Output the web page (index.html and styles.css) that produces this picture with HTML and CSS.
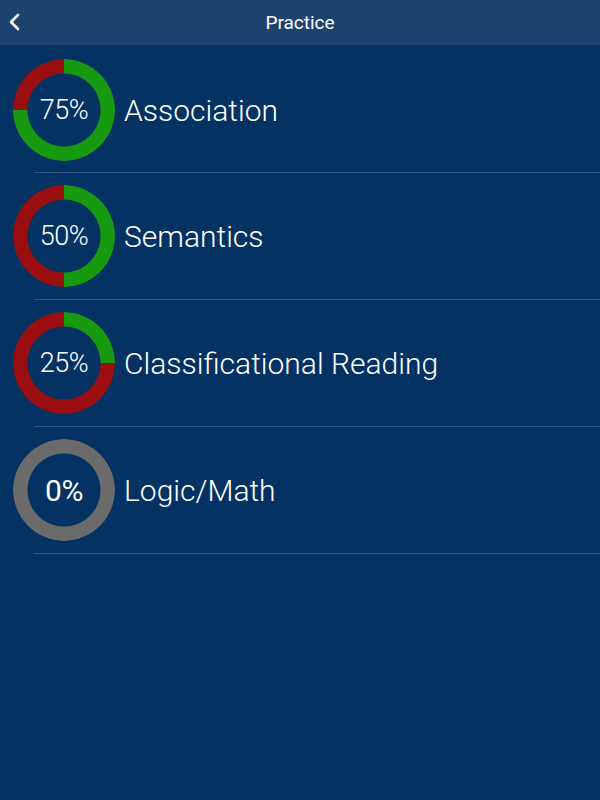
FILE: index.html
```html
<!DOCTYPE html>
<html lang="en">
<head>
    <meta charset="UTF-8">
    <meta name="viewport" content="width=device-width, initial-scale=1.0">
    <title>Practice</title>
    <link rel="stylesheet" href="styles.css">
</head>
<body>
    <div id="header">
        <button class="back" aria-label="Back">
            <svg width="14" height="20" viewBox="0 0 14 20">
                <path d="M11 3 L4 10 L11 17" fill="none" stroke="white" stroke-width="2.6" stroke-linecap="round" stroke-linejoin="round"/>
            </svg>
        </button>
        <h1>Practice</h1>
    </div>

    <ul id="list">
        <li class="row">
            <div class="ring">
                <div class="track" style="--p:75%"></div>
                <span class="pct">75%</span>
            </div>
            <span class="label">Association</span>
        </li>
        <li class="row">
            <div class="ring">
                <div class="track" style="--p:50%"></div>
                <span class="pct">50%</span>
            </div>
            <span class="label">Semantics</span>
        </li>
        <li class="row">
            <div class="ring">
                <div class="track" style="--p:25%"></div>
                <span class="pct">25%</span>
            </div>
            <span class="label">Classificational Reading</span>
        </li>
        <li class="row">
            <div class="ring">
                <div class="track empty"></div>
                <span class="pct zero">0%</span>
            </div>
            <span class="label">Logic/Math</span>
        </li>
    </ul>
</body>
</html>
```

FILE: styles.css
```css
*{
    margin: 0;
    padding: 0;
    box-sizing: border-box;
}

body{
    background-color: #033263;
    font-family: Roboto, "Liberation Sans", sans-serif;
    color: white;
    height: 800px;
}

#header{
    height: 45px;
    background-color: #1c426d;
    display: flex;
    align-items: center;
    justify-content: center;
    position: relative;
}

#header h1{
    font-size: 19px;
    font-weight: 400;
    margin-top: -1px;
}

.back{
    position: absolute;
    left: 6px;
    top: 12px;
    background: none;
    border: none;
    width: 16px;
    height: 22px;
}

#list{
    list-style: none;
}

.row{
    margin-left: 34px;
    height: 127px;
    border-bottom: 1px solid #2a5585;
    display: flex;
    align-items: center;
}

.row:first-child{
    height: 128px;
    padding-top: 3px;
}

.ring{
    margin-left: -21px;
    width: 102px;
    height: 102px;
    display: grid;
    place-items: center;
    flex-shrink: 0;
}

.track{
    grid-area: 1 / 1;
    width: 100%;
    height: 100%;
    border-radius: 50%;
    background: conic-gradient(#179a10 0 var(--p), #9a0e12 0);
    -webkit-mask: radial-gradient(circle, transparent 36px, black 37px);
    mask: radial-gradient(circle, transparent 36px, black 37px);
}

.track.empty{
    background: #6b6b6b;
}

.pct{
    grid-area: 1 / 1;
    font-size: 27px;
    font-weight: 300;
    letter-spacing: -0.5px;
}

.pct.zero{
    font-size: 30px;
    font-weight: 400;
}

.label{
    margin-left: 9px;
    font-size: 30px;
    font-weight: 300;
}
```
